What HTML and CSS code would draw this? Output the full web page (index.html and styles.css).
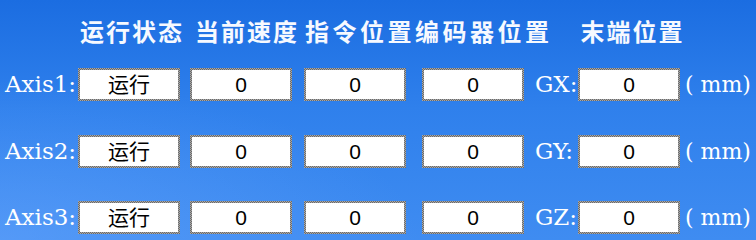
FILE: index.html
```html
<!DOCTYPE html>
<html lang="zh">
<head>
<meta charset="utf-8">
<title>轴状态</title>
<link rel="stylesheet" href="styles.css">
</head>
<body>
<div class="panel">
  <div class="title">
    <span class="t t1">运行状态</span>
    <span class="t t2">当前速度</span>
    <span class="t t3">指令位置编码器位置</span>
    <span class="t t4">末端位置</span>
  </div>
  <div class="rows">
    <div class="row">
      <span class="label">Axis1:</span>
      <span class="box b1">运行</span>
      <span class="box b2">0</span>
      <span class="box b3">0</span>
      <span class="box b4">0</span>
      <span class="glabel">GX:</span>
      <span class="box gbox">0</span>
      <span class="unit">( mm)</span>
    </div>
    <div class="row">
      <span class="label">Axis2:</span>
      <span class="box b1">运行</span>
      <span class="box b2">0</span>
      <span class="box b3">0</span>
      <span class="box b4">0</span>
      <span class="glabel">GY:</span>
      <span class="box gbox">0</span>
      <span class="unit">( mm)</span>
    </div>
    <div class="row">
      <span class="label">Axis3:</span>
      <span class="box b1">运行</span>
      <span class="box b2">0</span>
      <span class="box b3">0</span>
      <span class="box b4">0</span>
      <span class="glabel">GZ:</span>
      <span class="box gbox">0</span>
      <span class="unit">( mm)</span>
    </div>
  </div>
</div>
</body>
</html>
```

FILE: styles.css
```css
html, body {
  margin: 0;
  padding: 0;
}
body {
  width: 756px;
  height: 240px;
  overflow: hidden;
}
.panel {
  width: 756px;
  height: 240px;
  box-sizing: border-box;
  padding-top: 19px;
  background:
    radial-gradient(ellipse 420px 160px at 0% 100%, rgba(110, 170, 255, 0.45), rgba(110, 170, 255, 0) 100%),
    linear-gradient(180deg, #1b6de1 0%, #2f80ec 45%, #3f8cf1 100%);
}
.title {
  display: flex;
  padding-left: 80px;
  font-family: "Noto Sans CJK SC", sans-serif;
  font-weight: 700;
  font-size: 24px;
  line-height: 24px;
  color: #f6f9ff;
  white-space: nowrap;
}
.t { letter-spacing: 2px; }
.t2 { margin-left: 11px; }
.t3 { margin-left: 6px; letter-spacing: 3.5px; }
.t4 { margin-left: 28px; }

.rows {
  margin-top: 25px;
  display: flex;
  flex-direction: column;
  gap: 33.5px;
}
.row {
  display: flex;
  align-items: baseline;
  height: 33px;
}
.label {
  flex: 0 0 78px;
  box-sizing: border-box;
  padding-left: 5px;
  font-family: "DejaVu Serif", serif;
  font-size: 23px;
  line-height: 1;
  color: #ffffff;
  white-space: nowrap;
  overflow: visible;
}
.box {
  flex: 0 0 102px;
  height: 33px;
  box-sizing: border-box;
  border: 2px solid transparent;
  background:
    linear-gradient(#ffffff, #ffffff) padding-box,
    repeating-conic-gradient(#6a6a6a 0 25%, #a8a8a8 0 50%) 0 0 / 2px 2px border-box;
  font-family: "Liberation Sans", "Noto Sans CJK SC", sans-serif;
  font-size: 21px;
  line-height: 29px;
  text-align: center;
  color: #000000;
}
.b2 { margin-left: 10px; }
.b3 { margin-left: 12px; }
.b4 { margin-left: 16px; }
.glabel {
  flex: 0 0 43px;
  margin-left: 11px;
  font-family: "DejaVu Serif", serif;
  font-size: 23px;
  line-height: 1;
  color: #ffffff;
  white-space: nowrap;
}
.unit {
  margin-left: 5px;
  font-family: "DejaVu Serif", serif;
  font-size: 22px;
  line-height: 1;
  color: #ffffff;
  white-space: nowrap;
}
```
